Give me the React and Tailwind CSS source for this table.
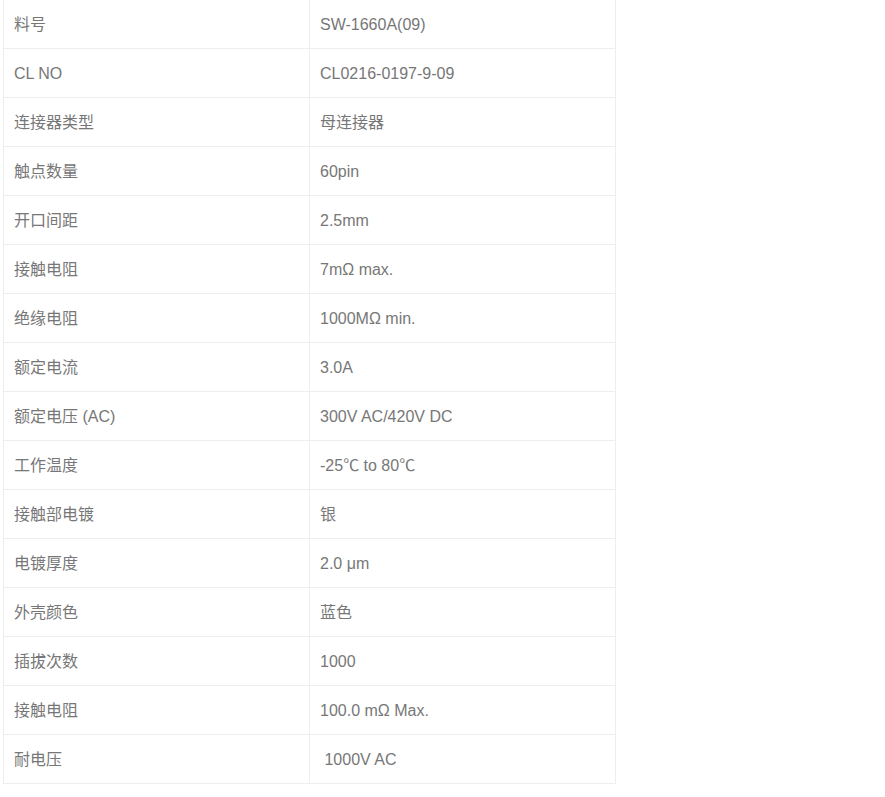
const rows = [
  ["料号", "SW-1660A(09)"],
  ["CL NO", "CL0216-0197-9-09"],
  ["连接器类型", "母连接器"],
  ["触点数量", "60pin"],
  ["开口间距", "2.5mm"],
  ["接触电阻", "7mΩ max."],
  ["绝缘电阻", "1000MΩ min."],
  ["额定电流", "3.0A"],
  ["额定电压 (AC)", "300V AC/420V DC"],
  ["工作温度", "-25℃ to 80℃"],
  ["接触部电镀", "银"],
  ["电镀厚度", "2.0 μm"],
  ["外壳颜色", "蓝色"],
  ["插拔次数", "1000"],
  ["接触电阻", "100.0 mΩ Max."],
  ["耐电压", "\u00a01000V AC"],
];

export default function App() {
  return (
    <div
      className="bg-white w-[885px] h-[797px] pl-[3px] text-[16px] text-[#777]"
      style={{ fontFamily: '"Liberation Sans", Arial, "Noto Sans CJK SC", sans-serif' }}
    >
      <div className="w-[613px] border-l border-r border-[#eeeeee]">
        {rows.map(([k, v], i) => (
          <div key={i} className="flex border-b border-[#eeeeee]">
            <div className="w-[306px] h-12 flex items-center pl-[10px] pt-[2px] border-r border-[#eeeeee] whitespace-pre">
              {k}
            </div>
            <div className="flex-1 h-12 flex items-center pl-[10px] pt-[2px] whitespace-pre">{v}</div>
          </div>
        ))}
      </div>
    </div>
  );
}
